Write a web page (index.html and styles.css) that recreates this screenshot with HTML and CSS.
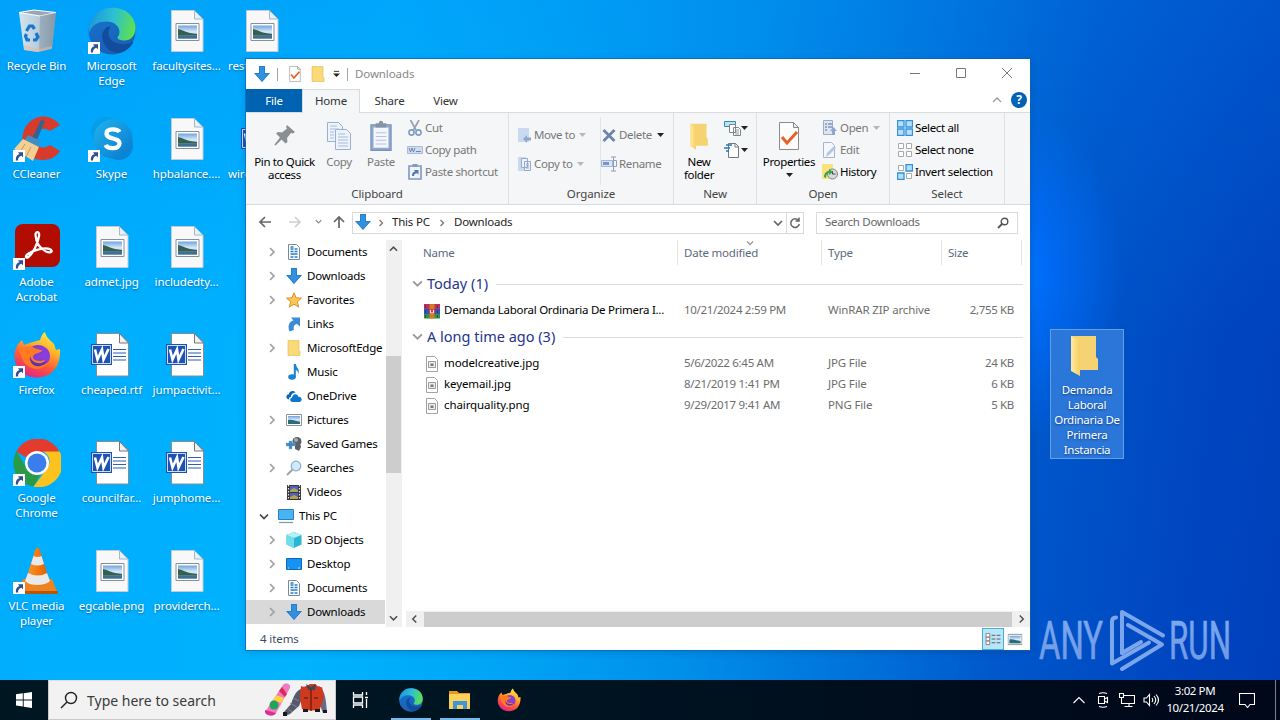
FILE: index.html
```html
<!DOCTYPE html>
<html lang="en">
<head>
<meta charset="utf-8">
<title>Downloads</title>
<link rel="stylesheet" href="styles.css">
</head>
<body>
<svg class="defs" aria-hidden="true">
  <defs>
    <linearGradient id="gSky" x1="0" y1="0" x2="0" y2="1"><stop offset="0" stop-color="#6fa3e0"/><stop offset=".5" stop-color="#dcebf7"/><stop offset="1" stop-color="#4f86b8"/></linearGradient>
    <linearGradient id="gBin" x1="0" x2="1"><stop offset="0" stop-color="#e6eaee"/><stop offset=".6" stop-color="#c3ccd4"/><stop offset="1" stop-color="#8e9aa4"/></linearGradient>
    <linearGradient id="gEdgeTop" x1="0" y1=".3" x2="1" y2=".5"><stop offset="0" stop-color="#1a96dc"/><stop offset=".5" stop-color="#2cc0d4"/><stop offset="1" stop-color="#5fe04e"/></linearGradient>
    <linearGradient id="gEdgeMid" x1="0" y1="0" x2=".4" y2="1"><stop offset="0" stop-color="#1477d4"/><stop offset="1" stop-color="#1b5fb4"/></linearGradient>
    <linearGradient id="gFox" x1=".8" y1="0" x2=".3" y2="1"><stop offset="0" stop-color="#fff04a"/><stop offset=".35" stop-color="#ffb02a"/><stop offset=".65" stop-color="#ff5a36"/><stop offset="1" stop-color="#e0208c"/></linearGradient>
    <linearGradient id="gFold" x1="0" x2="1"><stop offset="0" stop-color="#ffe9a8"/><stop offset="1" stop-color="#f8cf5e"/></linearGradient>
    <linearGradient id="gCone" x1="0" x2="1"><stop offset="0" stop-color="#ff9a2a"/><stop offset=".5" stop-color="#f47a10"/><stop offset="1" stop-color="#d85c00"/></linearGradient>
    <linearGradient id="gSkype" x1="0" y1="0" x2="1" y2="1"><stop offset="0" stop-color="#1fb4ee"/><stop offset="1" stop-color="#0a78cc"/></linearGradient>
    <linearGradient id="gMark" x1="0" y1="0" x2="0" y2="1"><stop offset="0" stop-color="#7eabf0"/><stop offset="1" stop-color="#6d97e2"/></linearGradient>
  </defs>
  <symbol id="shortcut" viewBox="0 0 12 12"><path d="M0 0h12v12H0z" fill="#fff"/><path d="M3 10.500C2.500 7 4 4.500 6.500 4.200L5 2.300h5v5L8.200 5.800C6 6.500 5 8 5 10.500z" fill="#2f4f8f"/></symbol>
  <symbol id="bin" viewBox="0 0 48 48"><path d="M6 5.500 21 3l22 2.500-4 36-14 3.500-14-2z" fill="url(#gBin)" opacity=".92"/><path d="M6 5.500 21 3l22 2.500L27 9z" fill="#9aa7b2" stroke="#fff" stroke-width="1"/><path d="M27 9 43 5.500l-4 36-13 3.500z" fill="#8797a5" opacity=".55"/><path d="m11 38 15 4 13-3-.5 3L25 45l-14-2z" fill="#e8b8a4" opacity=".55"/><g fill="none" stroke="#1677d0" stroke-width="3.200"><path d="m13.500 24 3-5h3l2 3"/><path d="m23 26 2 4-2 3h-3"/><path d="M17 33h-3l-1.500-4 1-2"/></g></symbol>
  <symbol id="edge" viewBox="0 0 48 48"><circle cx="24" cy="24" r="23.500" fill="url(#gEdgeMid)"/><path d="M1 19C4 7 13 .5 24 .5 38 .5 47.500 10 47.500 21c0 8-5 12.500-11 12.500-4 0-7-1-7-3 0-1 2-2 2-6 0-5-5-10-13-10C11 14.500 4 17 1 26z" fill="url(#gEdgeTop)"/><path d="M19 20c-4 3-6 8-4 14 2 7 9 12 16 12 6-1 11-5 14-10 .6-1-.2-1.600-1.200-1-9 5-21 1-23-6-1-4 0-7 2-9.500z" fill="#114d9c"/></symbol>
  <symbol id="imgfile" viewBox="0 0 48 48"><path d="M8.500 3.500h23L40 12v32.500H8.500z" fill="#f8f8f8" stroke="#c5cbd0"/><path d="M31.500 3.500V12H40z" fill="#dff2fd" stroke="#a9b7c0"/><path d="M13 16.500h23v17H13z" fill="#fff" stroke="#85909a"/><path d="M15 18.500h19v13H15z" fill="url(#gSky)"/><path d="M15 22c5 1 8 4 19 5v1.500H15z" fill="#33614e"/><path d="M15 28.500h19v3H15z" fill="#3f6f92"/></symbol>
  <symbol id="word" viewBox="0 0 48 48"><path d="M8.500 2.500h23L40.500 12v33H8.500z" fill="#fff" stroke="#8c8c8c"/><path d="M31.500 2.500V12h9z" fill="#f1f1f1" stroke="#777"/><path d="M25 18.500h13M25 22h13M25 25.500h13M25 29h13" stroke="#2b5fb8" stroke-width="1.200"/><path d="M3 13h21v21H3z" fill="#1c52b4"/><path d="M4.500 14.500h18v18h-18z" fill="none" stroke="#fff" stroke-width=".8"/><path d="m7 18.500 2.500 10 4.500-10 1.500 10 5-10.500" fill="none" stroke="#fff" stroke-width="2.600"/></symbol>
  <symbol id="cc" viewBox="0 0 48 48"><path d="M47 10C42 4 36 1 29 1.500 18 2.500 9 12 9.500 25S19 45 30 45c8 0 14-4 17-9l-10-6c-6 5-16 2-16-6 0-9 9-13 16-8z" fill="#d83a2c"/><path d="m28 5 4 1-8 19-5-2z" fill="#32658e"/><path d="m15 20 13 6-4 8-14-6z" fill="#3f8fc4"/><path d="m10 24 16 8-6 14L1 34z" fill="#f3cf93"/><path d="m12 29-5 8m11-5-5 10" stroke="#c99c58"/></symbol>
  <symbol id="skype" viewBox="0 0 48 48"><circle cx="18" cy="17" r="15" fill="#079ee8"/><circle cx="31" cy="31" r="14" fill="#0a86d8"/><circle cx="25" cy="24" r="19.500" fill="url(#gSkype)"/><path d="M31.500 17c-2-3.500-13-4-13 1.500 0 6.500 13 3.500 13 10 0 6-11.500 6-14 1.500" fill="none" stroke="#fff" stroke-width="4.300"/></symbol>
  <symbol id="adobe" viewBox="0 0 48 48"><rect x="2" y="1" width="45" height="43" rx="8" fill="#b20b00"/><path d="M22.500 12c0-4 4.500-4 3.500 1-1.200 8-6 17-10.500 21-3 2-4-1 0-3.500 6-4 17-6.500 22-4 3 2 0 4-4.500 2-6-3-10-9-10.500-16.500z" fill="none" stroke="#fff" stroke-width="2.300"/></symbol>
  <symbol id="firefox" viewBox="0 0 48 48"><path d="M27 9C28 5 30 2 32 1c1 5 5 8 9 12l2 6 4-1c1 16-7 28-22 28.500C11 47 1 37 1.500 24 2 17 5 12 9 9l2 5c4-2 10-3 16-5z" fill="url(#gFox)"/><circle cx="25" cy="25" r="11" fill="#7b3fd4"/><path d="M6 19c4-4 11-5 18-1l6 1c-2 3-7 3-9 5-3 3 1 6 6 6 4 0 6-3 10-3-1 7-7 11-14 11-10-1-14-9-17-19z" fill="#ff7a22"/><path d="M17 25c1 5 6 8 11 7 3-.5 5-3 8-3-3 5-9 7-13 6s-7-5-6-10z" fill="#6330b0"/><path d="M23 17c6-4 14 0 14 8 0 3-1 5-3 7-2-3-5-4-9-4-3 0-4-3-1-4 3-.5 5-1.500 6-4z" fill="#8a3ddc"/></symbol>
  <symbol id="chrome" viewBox="0 0 48 48"><path d="M3.500 12.500a24 24 0 0 1 43 .5H24A11 11 0 0 0 14 19z" fill="#e33b2e"/><path d="M3.500 12a24 24 0 0 0 17 35.500l10-17.500A11.500 11.500 0 0 1 14 30z" fill="#2a9a47"/><path d="M46.500 12.500A24 24 0 0 1 20.500 47.700L34 29.500a11 11 0 0 0-4-17z" fill="#fcc31e"/><circle cx="24" cy="24" r="12" fill="#fff"/><circle cx="24" cy="24" r="9.500" fill="#3b7ded"/></symbol>
  <symbol id="vlc" viewBox="0 0 48 48"><path d="m10 32-6 15h41l-6-15z" fill="#ee8420"/><path d="M4 44h41v3H4z" fill="#b95408"/><path d="M22.500 2q2-2 4 0l10 32q-5 5-12.500 5t-11.500-5z" fill="url(#gCone)"/><path d="m20.500 9-2.500 8q6 3 13 0L28.500 9q-4 2-8 0zM15 26l-3 8q4 4 12.500 4T37 34l-3-8q-9 5-19 0z" fill="#e9e9e9"/></symbol>
  <symbol id="bigfolder" viewBox="0 0 48 48"><path d="M9 4h25v21l2 2v11H9z" fill="#f5d272"/><path d="m9 4 9 5v35L9 39z" fill="url(#gFold)"/></symbol>
  <symbol id="down" viewBox="0 0 16 16"><path d="M5 0h6v7h5l-8 9-8-9h5z" fill="#3390dc"/><path d="M5.500.5h5v7H15L8 15.300 1 7.500h4.500z" fill="none" stroke="#1c78c8" stroke-width=".7"/></symbol>
  <symbol id="folder" viewBox="0 0 16 16"><path d="M2 .5h11v10l1 1v4H2z" fill="#f9d978" stroke="#e2b84e" stroke-width=".6"/></symbol>
  <symbol id="doc" viewBox="0 0 16 16"><path d="M2.500.5h8l3 3v12h-11z" fill="#fff" stroke="#7d8b96"/><path d="M4.500 3h3M4.500 5h3m1 0h3M4.500 7.500h3m1 0h3m-7 2.500h7m-7 3h3m1 0h3" stroke="#2680c8" stroke-width="1.400"/></symbol>
  <symbol id="star" viewBox="0 0 16 16"><path d="m8 .8 2.100 5 5.400.4-4.200 3.500 1.400 5.400L8 12.200l-4.700 2.900 1.400-5.400L.5 6.200l5.400-.4z" fill="#fcc956" stroke="#e38b28"/></symbol>
  <symbol id="links" viewBox="0 0 16 16"><path d="M3.500 15.500C1 9 4 5 7.500 4.500L5 1.500h9v9l-3-2.500C8 8.500 7 11 8 14z" fill="#3a8bd8"/></symbol>
  <symbol id="music" viewBox="0 0 16 16"><ellipse cx="6" cy="13" rx="3.800" ry="2.800" fill="#1a83d2"/><path d="M7.800 0H10c0 4 4 4.500 2.500 10C12 7 11 6.500 9.800 6v7h-2z" fill="#1a83d2"/></symbol>
  <symbol id="cloud" viewBox="0 0 16 16"><path d="M3.500 11.500c-4 0-4-5-.8-5.300C3.500 2.800 8 1.800 9.500 4.500 6 5 5 7 5 9c-2 0-2.400 1.500-1.500 2.500z" fill="#0b68b8"/><path d="M6.500 14c-3-.5-3-4-.3-4.500C6.500 5.500 11.500 5.300 12.300 8.700c4-.2 4.700 4.800.7 5.300z" fill="#0b78cc"/></symbol>
  <symbol id="pic" viewBox="0 0 16 16"><path d="M.5 2.500h15v11H.5z" fill="#fff" stroke="#8a949c"/><path d="M2 4h12v8H2z" fill="url(#gSky)"/><path d="M2 8c4-1 7 1 12 2v2H2z" fill="#2c6b78"/></symbol>
  <symbol id="games" viewBox="0 0 16 16"><circle cx="11" cy="5.500" r="4.500" fill="#59616a"/><circle cx="10" cy="4" r="2" fill="#a3acb5"/><path d="M9 8c4-1 6 0 6 3l-2 4-4-2z" fill="#59616a"/><path d="M0 7h3V5h3v2h3v3H6v3H3v-3H0z" fill="#3b86c4" stroke="#8cb4d4" stroke-width=".5"/></symbol>
  <symbol id="search" viewBox="0 0 16 16"><path d="m7 9-6 6" stroke="#9ba5ae" stroke-width="2"/><circle cx="10" cy="6" r="4.800" fill="#cfeafb" stroke="#8aaecb" stroke-width="1.200"/></symbol>
  <symbol id="video" viewBox="0 0 16 16"><path d="M1 1h14v15H1z" fill="#35353b"/><path d="M4 2h8v6H4zM4 9h8v6H4z" fill="#4e62bf"/><path d="m4 6 4-2 4 2v2H4zm0 7 4-2 4 2v2H4z" fill="#b3a350"/><path d="M2.500 1v15m11-15v15" stroke="#eee" stroke-width="1.200" stroke-dasharray="1.500 1.500"/></symbol>
  <symbol id="pc" viewBox="0 0 16 16"><path d="M.5 1.500h15v10H.5z" fill="#49b4f4" stroke="#287ebc"/><path d="M1 14.500h14" stroke="#7c98ac" stroke-width="1.200"/></symbol>
  <symbol id="cube" viewBox="0 0 16 16"><path d="m8 0 7.500 3v9.500L8 16 .5 12.500V3z" fill="#2cb5d2"/><path d="m.5 3 7.500 3v10L.5 12.500z" fill="#70ddea"/><path d="m.5 3 7.500-3 7.500 3L8 6z" fill="#b4f1f5"/></symbol>
  <symbol id="desk" viewBox="0 0 16 16"><path d="M.5 2.500h15v11H.5z" fill="#1693f0" stroke="#0d6cb8"/><path d="M2 12h1m9 0h2" stroke="#b9e2ff"/></symbol>
  <symbol id="smallimg" viewBox="0 0 16 16"><path d="M2.500.5h8l3 3v12h-11z" fill="#fff" stroke="#a2a2a2"/><path d="M4.500 5.500h7v6h-7z" fill="#eee" stroke="#999"/><path d="M6.500 7.500h3v2.500h-3z" fill="#777"/></symbol>
  <symbol id="rar" viewBox="0 0 16 16"><path d="M0 1h16v5H0z" fill="#b8305c"/><path d="M0 6h16v5H0z" fill="#2c58bd"/><path d="M0 11h16v4.500H0z" fill="#2c9446"/><path d="M5.500 1h5v14.500h-5z" fill="#d47a25"/><path d="M5 6h6v5H5z" fill="#e33d33"/><path d="M6.500 7v3h3V7" fill="none" stroke="#eee"/><path d="M1.500 2v3m0 2v3m0 2v3m12-13v3m0 2v3m0 2v3" stroke="#2a2a50" opacity=".6"/></symbol>
  <symbol id="chev" viewBox="0 0 8 10"><path d="m2 1 4 4-4 4" fill="none" stroke="currentColor" stroke-width="1.700"/></symbol>
  <symbol id="chevd" viewBox="0 0 10 8"><path d="m1 2 4 4 4-4" fill="none" stroke="currentColor" stroke-width="1.700"/></symbol>
  <symbol id="tri" viewBox="0 0 7 4"><path d="M0 0h7L3.500 4z" fill="currentColor"/></symbol>
  <symbol id="check" viewBox="0 0 24 32"><path d="M2.500 2.500h14l5 5v22h-19z" fill="#fdfdfd" stroke="#8b8b8b"/><path d="M16.500 2.500v5h5z" fill="#eee" stroke="#8b8b8b"/><path d="m5 17 5 6 10-11" fill="none" stroke="#e4622a" stroke-width="3"/></symbol>
  <symbol id="pin" viewBox="0 0 24 24"><path d="m14 1 8 7-2 1.500-2-.5-4 5 .5 4-2 1.500-4-4L3 21l-1 .5-.500-1L7 13.500 3 9.500l2-1.500 4 .5 5-4-1-1.500z" fill="#8a8f94"/></symbol>
  <symbol id="copy" viewBox="0 0 24 28"><g fill="#edf3fb" stroke="#9cb0ce"><path d="M.5.5h11l4 4v15H.5z"/><path d="M8.500 7.500h11l4 4v16h-15z"/></g><path d="M3 4h7M3 7h9M3 10h4m-4 3h4m-4 3h4m4-4h7m-7 3h10m-10 3h10m-10 3h10m-10 3h10" stroke="#a9bddc"/></symbol>
  <symbol id="paste" viewBox="0 0 22 30"><path d="M1.500 4.500h19v24h-19z" fill="#8fa9cf" stroke="#7890b5"/><path d="M4 7h14v19H4z" fill="#f3f7fc"/><path d="M6 3h3c0-3 4-3 4 0h3v4H6z" fill="#8794a8"/><path d="M6 12h10M6 15.500h10M6 19h10M6 22.500h10" stroke="#b2c4df"/></symbol>
  <symbol id="cut" viewBox="0 0 16 16"><path d="M3.500 0 9 10M12 0 6.500 10" stroke="#97a2af" stroke-width="1.700"/><circle cx="4.500" cy="12.500" r="2.600" fill="none" stroke="#7c9cc9" stroke-width="1.600"/><circle cx="11.500" cy="12.500" r="2.600" fill="none" stroke="#7c9cc9" stroke-width="1.600"/></symbol>
  <symbol id="path" viewBox="0 0 16 16"><path d="M.5 4.500h15v7H.5z" fill="#cfddf1" stroke="#a7bcdc"/><path d="m2 6 1.500 4L5 6l1.500 4L8 6m1 3.500h5" fill="none" stroke="#7186aa"/></symbol>
  <symbol id="pshort" viewBox="0 0 16 16"><path d="M2 2h12v13H2z" fill="#eef4fc" stroke="#8098c2" stroke-width="1.600"/><path d="M5.500 0h5v3h-5z" fill="#8098c2"/><path d="M5 12c0-3 1-4 3-4.500L7 6h4.500v4.500L10 9.300C8 9.500 7 10.500 7 12z" fill="#5877b2"/></symbol>
  <symbol id="moveto" viewBox="0 0 16 16"><path d="M1 1h11v14H1z" fill="#c9d9f0"/><path d="M14 10.500h-4V8l-4 4 4 4v-2.500h4z" fill="#8fa7cf"/></symbol>
  <symbol id="copyto" viewBox="0 0 16 16"><path d="M1 1h8v14H1z" fill="#c9d9f0"/><path d="M4.500 2.500h6v9h-6zM7.500 5.500h6v9h-6z" fill="#eff4fb" stroke="#93a9cd"/><path d="M9 8h3m-3 2h3m-3 2h3" stroke="#93a9cd"/></symbol>
  <symbol id="del" viewBox="0 0 16 16"><path d="m2.500 3 11 11m0-11-11 11" stroke="#6e85ab" stroke-width="2.800"/></symbol>
  <symbol id="ren" viewBox="0 0 16 16"><path d="M.5 4.500h11v6H.5z" fill="#d7e4f5" stroke="#a0b6d8"/><path d="M2 6h6v3H2z" fill="#7894c0"/><path d="M12.500 1v14M10 1h5m-5 14h5m-2-10.500h2.500v6H13" fill="none" stroke="#8e9fba"/></symbol>
  <symbol id="newitem" viewBox="0 0 18 16"><path d="M.5 1.500h11v5H.5z" fill="#bde3f3" stroke="#368ca9"/><path d="M5.500 4.500h6v8h-6zM9.500 7.500h5l2 2v6h-7z" fill="#fff" stroke="#7b858c"/><path d="M11 10h4m-4 2h4m-4 2h4" stroke="#8b979e"/></symbol>
  <symbol id="easy" viewBox="0 0 18 16"><path d="M4.500 1.500h7l3 3v11h-10z" fill="#fff" stroke="#777"/><path d="M11 1v4h4" fill="none" stroke="#777"/><path d="M2 3h6M0 6h6M2 9h3" stroke="#2678be" stroke-width="1.600"/></symbol>
  <symbol id="open" viewBox="0 0 16 16"><path d="M1.500.5h9v14h-9z" fill="#dce5f3" stroke="#9dacc4"/><path d="M3 4h2m1 0h4M3 7h2m1 0h4m-7 3h2" stroke="#8197bd" stroke-width="1.500"/><path d="m10 15 0-4-2 0 3.500-4 3.500 4h-2v4z" fill="#8fa6cd"/></symbol>
  <symbol id="edit" viewBox="0 0 16 16"><path d="M1.500.5h8l3 3v12h-11z" fill="#f4f8fd" stroke="#a8b5c9"/><path d="m4 15 1-4 7-7 2 2-7 7z" fill="#b3c7e5"/></symbol>
  <symbol id="history" viewBox="0 0 16 16"><path d="M0 0h11v15H0z" fill="#fbe27e"/><circle cx="10.500" cy="10" r="5" fill="#d8dadb" stroke="#7f8588"/><path d="M10.500 7v3h3" fill="none" stroke="#444"/><path d="M2 13c0-4 3-6 5-6V5l4 3-4 3V9c-2 0-3 2-3 5z" fill="#39a449"/></symbol>
  <symbol id="selall" viewBox="0 0 16 16"><path d="M.5.5h6.500v6.500H.5zM9 .5h6.500v6.500H9zM.5 9h6.500v6.500H.5zM9 9h6.500v6.500H9z" fill="#b7defb" stroke="#2e93dc" stroke-width="1.300"/></symbol>
  <symbol id="selnone" viewBox="0 0 16 16"><path d="M1.500 1.500h5v5h-5zM9.500 1.500h5v5h-5zM1.500 9.500h5v5h-5zM9.500 9.500h5v5h-5z" fill="#fff" stroke="#aaa"/></symbol>
  <symbol id="selinv" viewBox="0 0 16 16"><path d="M1.500 1.500h5v5h-5zM9.500 9.500h5v5h-5z" fill="#fff" stroke="#aaa"/><path d="M9 .5h6.500v6.500H9zM.5 9h6.500v6.500H.5z" fill="#b7defb" stroke="#2e93dc" stroke-width="1.300"/></symbol>
  <symbol id="arrow" viewBox="0 0 14 12"><path d="M13 6H2m5-5L2 6l5 5" fill="none" stroke="currentColor" stroke-width="1.700"/></symbol>
</svg>

<main class="desktop">
  <div class="shortcuts">
    <div class="item"><svg class="pic"><use href="#bin"/></svg><span>Recycle Bin</span></div>
    <div class="item link"><svg class="pic"><use href="#cc"/></svg><svg class="badge"><use href="#shortcut"/></svg><span>CCleaner</span></div>
    <div class="item link"><svg class="pic"><use href="#adobe"/></svg><svg class="badge"><use href="#shortcut"/></svg><span>Adobe<br>Acrobat</span></div>
    <div class="item link"><svg class="pic"><use href="#firefox"/></svg><svg class="badge"><use href="#shortcut"/></svg><span>Firefox</span></div>
    <div class="item link"><svg class="pic"><use href="#chrome"/></svg><svg class="badge"><use href="#shortcut"/></svg><span>Google<br>Chrome</span></div>
    <div class="item link"><svg class="pic"><use href="#vlc"/></svg><svg class="badge"><use href="#shortcut"/></svg><span>VLC media<br>player</span></div>
    <div class="item link"><svg class="pic"><use href="#edge"/></svg><svg class="badge"><use href="#shortcut"/></svg><span>Microsoft<br>Edge</span></div>
    <div class="item link"><svg class="pic"><use href="#skype"/></svg><svg class="badge"><use href="#shortcut"/></svg><span>Skype</span></div>
    <div class="item"><svg class="pic"><use href="#imgfile"/></svg><span>admet.jpg</span></div>
    <div class="item"><svg class="pic"><use href="#word"/></svg><span>cheaped.rtf</span></div>
    <div class="item"><svg class="pic"><use href="#word"/></svg><span>councilfar...</span></div>
    <div class="item"><svg class="pic"><use href="#imgfile"/></svg><span>egcable.png</span></div>
    <div class="item"><svg class="pic"><use href="#imgfile"/></svg><span>facultysites...</span></div>
    <div class="item"><svg class="pic"><use href="#imgfile"/></svg><span>hpbalance....</span></div>
    <div class="item"><svg class="pic"><use href="#imgfile"/></svg><span>includedty...</span></div>
    <div class="item"><svg class="pic"><use href="#word"/></svg><span>jumpactivit...</span></div>
    <div class="item"><svg class="pic"><use href="#word"/></svg><span>jumphome...</span></div>
    <div class="item"><svg class="pic"><use href="#imgfile"/></svg><span>providerch...</span></div>
    <div class="item"><svg class="pic"><use href="#imgfile"/></svg><span class="under">rest</span></div>
    <div class="item"><svg class="pic"><use href="#word"/></svg><span class="under">wire</span></div>
  </div>

  <div class="picked"><svg class="pic"><use href="#bigfolder"/></svg><span>Demanda<br>Laboral<br>Ordinaria De<br>Primera<br>Instancia</span></div>

  <svg class="watermark" viewBox="0 0 194 64">
    <g font-family="Roboto, sans-serif" font-weight="400" font-size="53" fill="url(#gMark)" stroke="url(#gMark)" stroke-width=".6">
      <text x="0" y="50" textLength="64" lengthAdjust="spacingAndGlyphs">ANY</text>
      <text x="130" y="50" textLength="62" lengthAdjust="spacingAndGlyphs">RUN</text>
    </g>
    <g fill="none" stroke="#7ba6ec" stroke-width="4" stroke-linejoin="round" stroke-linecap="round">
      <path d="M77 8.500c-3 0-4 1.500-4 4v42l37-21"/>
      <path d="M83 44V3l41 23.500"/>
      <path d="M89 16l34 19.500L83 60"/>
      <path d="M83 44l19-11"/>
    </g>
  </svg>

  <section class="window">
    <header class="titlebar">
      <svg class="i16"><use href="#down"/></svg><i class="bar"></i>
      <svg class="qa" viewBox="0 0 24 32"><use href="#check"/></svg>
      <svg class="i16 qf"><use href="#folder"/></svg>
      <svg class="qd" viewBox="0 0 8 8"><path d="M1 1h6" stroke="#222"/><path d="M0 3.500h8L4 7.500z" fill="#222"/></svg>
      <i class="bar"></i><span class="title">Downloads</span>
      <div class="caption">
        <svg viewBox="0 0 12 12"><path d="M1 5.500h10" /></svg>
        <svg viewBox="0 0 12 12"><path d="M1.500 .5h9v9h-9z"/></svg>
        <svg viewBox="0 0 12 12"><path d="m1 0 10 10m0-10L1 10"/></svg>
      </div>
    </header>
    <nav class="tabs">
      <span class="file">File</span><span class="home">Home</span><span class="share">Share</span><span class="view">View</span>
      <svg class="fold" viewBox="0 0 10 8"><path d="m1 6 4-4 4 4" fill="none" stroke="#999" stroke-width="1.300"/></svg>
      <b class="help">?</b>
    </nav>
    <div class="ribbon">
      <div class="group clip"><div class="body">
        <div class="big pinb"><svg viewBox="0 0 24 24"><use href="#pin"/></svg><span>Pin to Quick<br>access</span></div>
        <div class="big off cpy"><svg viewBox="0 0 24 28"><use href="#copy"/></svg><span>Copy</span></div>
        <div class="big off pst"><svg viewBox="0 0 22 30"><use href="#paste"/></svg><span>Paste</span></div>
        <div class="rows off"><div><svg class="i16"><use href="#cut"/></svg>Cut</div><div><svg class="i16"><use href="#path"/></svg>Copy path</div><div><svg class="i16"><use href="#pshort"/></svg>Paste shortcut</div></div>
      </div><span class="name">Clipboard</span></div>
      <div class="group org"><div class="body">
        <div class="rows two off mv"><div><svg class="i16"><use href="#moveto"/></svg>Move to<svg class="t"><use href="#tri"/></svg></div><div><svg class="i16"><use href="#copyto"/></svg>Copy to<svg class="t"><use href="#tri"/></svg></div></div>
        <div class="rows two off"><div><svg class="i16"><use href="#del"/></svg>Delete<svg class="t on"><use href="#tri"/></svg></div><div><svg class="i16"><use href="#ren"/></svg>Rename</div></div>
      </div><span class="name">Organize</span></div>
      <div class="group new"><div class="body">
        <div class="big nf"><svg viewBox="8 3 32 43"><use href="#bigfolder" width="48" height="48"/></svg><span>New<br>folder</span></div>
        <div class="rows"><div><svg class="i18"><use href="#newitem"/></svg><svg class="t on"><use href="#tri"/></svg></div><div><svg class="i18"><use href="#easy"/></svg><svg class="t on"><use href="#tri"/></svg></div></div>
      </div><span class="name">New</span></div>
      <div class="group opn"><div class="body">
        <div class="big prop"><svg viewBox="0 0 24 32"><use href="#check"/></svg><span>Properties</span><svg class="t on"><use href="#tri"/></svg></div>
        <div class="rows"><div class="off"><svg class="i16"><use href="#open"/></svg>Open<svg class="t"><use href="#tri"/></svg></div><div class="off"><svg class="i16"><use href="#edit"/></svg>Edit</div><div><svg class="i16"><use href="#history"/></svg>History</div></div>
      </div><span class="name">Open</span></div>
      <div class="group sel"><div class="body">
        <div class="rows"><div><svg class="i16"><use href="#selall"/></svg>Select all</div><div><svg class="i16"><use href="#selnone"/></svg>Select none</div><div><svg class="i16"><use href="#selinv"/></svg>Invert selection</div></div>
      </div><span class="name">Select</span></div>
    </div>
    <div class="address">
      <svg class="nav"><use href="#arrow"/></svg>
      <svg class="nav fwd"><use href="#arrow"/></svg>
      <svg class="nd"><use href="#chevd"/></svg>
      <svg class="nav up"><use href="#arrow"/></svg>
      <div class="crumbs"><svg class="i16"><use href="#down"/></svg><svg class="cv"><use href="#chev"/></svg><span class="c1">This PC</span><svg class="cv"><use href="#chev"/></svg><span class="c2">Downloads</span><svg class="cd"><use href="#chevd"/></svg></div>
      <div class="reload"><svg viewBox="0 0 12 12"><path d="M9.500 3.500A4.300 4.300 0 1 0 10.300 7M10 .5v3.500H6.500" fill="none" stroke="#666" stroke-width="1.500"/></svg></div>
      <div class="find"><span>Search Downloads</span><svg viewBox="0 0 12 12"><circle cx="7.500" cy="4.500" r="3.300" fill="none" stroke="#555" stroke-width="1.400"/><path d="m5 7-4 4" stroke="#555" stroke-width="1.800"/></svg></div>
    </div>
    <div class="content">
      <aside class="tree">
        <div><svg class="ex"><use href="#chev"/></svg><svg class="i16"><use href="#doc"/></svg>Documents</div>
        <div><svg class="ex"><use href="#chev"/></svg><svg class="i16"><use href="#down"/></svg>Downloads</div>
        <div><svg class="ex"><use href="#chev"/></svg><svg class="i16"><use href="#star"/></svg>Favorites</div>
        <div><svg class="ex"></svg><svg class="i16"><use href="#links"/></svg>Links</div>
        <div><svg class="ex"><use href="#chev"/></svg><svg class="i16"><use href="#folder"/></svg>MicrosoftEdge</div>
        <div><svg class="ex"></svg><svg class="i16"><use href="#music"/></svg>Music</div>
        <div><svg class="ex"></svg><svg class="i16"><use href="#cloud"/></svg>OneDrive</div>
        <div><svg class="ex"><use href="#chev"/></svg><svg class="i16"><use href="#pic"/></svg>Pictures</div>
        <div><svg class="ex"></svg><svg class="i16"><use href="#games"/></svg>Saved Games</div>
        <div><svg class="ex"><use href="#chev"/></svg><svg class="i16"><use href="#search"/></svg>Searches</div>
        <div><svg class="ex"></svg><svg class="i16"><use href="#video"/></svg>Videos</div>
        <div class="root"><svg class="ex open"><use href="#chevd"/></svg><svg class="i16"><use href="#pc"/></svg>This PC</div>
        <div><svg class="ex"><use href="#chev"/></svg><svg class="i16"><use href="#cube"/></svg>3D Objects</div>
        <div><svg class="ex"><use href="#chev"/></svg><svg class="i16"><use href="#desk"/></svg>Desktop</div>
        <div><svg class="ex"><use href="#chev"/></svg><svg class="i16"><use href="#doc"/></svg>Documents</div>
        <div class="current"><svg class="ex"><use href="#chev"/></svg><svg class="i16"><use href="#down"/></svg>Downloads</div>
      </aside>
      <div class="vscroll"><svg class="flip"><use href="#chevd"/></svg><i></i><svg><use href="#chevd"/></svg></div>
      <div class="files">
        <div class="cols"><span>Name</span><span>Date modified<svg class="sort"><use href="#chevd"/></svg></span><span>Type</span><span>Size</span></div>
        <div class="grp"><svg><use href="#chevd"/></svg><span class="g1">Today (1)</span><i></i></div>
        <div class="row"><span><svg class="i16"><use href="#rar"/></svg><em class="long">Demanda Laboral Ordinaria De Primera I...</em></span><span>10/21/2024 2:59 PM</span><span>WinRAR ZIP archive</span><span>2,755 KB</span></div>
        <div class="grp"><svg><use href="#chevd"/></svg><span class="g2">A long time ago (3)</span><i></i></div>
        <div class="row"><span><svg class="i16"><use href="#smallimg"/></svg><em>modelcreative.jpg</em></span><span>5/6/2022 6:45 AM</span><span>JPG File</span><span>24 KB</span></div>
        <div class="row"><span><svg class="i16"><use href="#smallimg"/></svg><em>keyemail.jpg</em></span><span>8/21/2019 1:41 PM</span><span>JPG File</span><span>6 KB</span></div>
        <div class="row"><span><svg class="i16"><use href="#smallimg"/></svg><em>chairquality.png</em></span><span>9/29/2017 9:41 AM</span><span>PNG File</span><span>5 KB</span></div>
        <div class="hscroll"><svg class="flip"><use href="#chev"/></svg><i></i><svg><use href="#chev"/></svg></div>
      </div>
    </div>
    <footer class="status"><span>4 items</span>
      <div class="mode active"><svg viewBox="0 0 16 14"><path d="M.5.500h4v4h-4zM.500 4.500h4v4h-4zM.500 8.500h4v4h-4z" fill="#fff" stroke="#8a8080"/><path d="M6.500 2.500h4m1.500 0h4M6.500 6.500h4m1.500 0h4M6.500 10.500h4m1.500 0h4" stroke="#555"/></svg></div>
      <div class="mode"><svg viewBox="0 1 16 14"><use href="#pic" width="16" height="16"/></svg></div>
    </footer>
  </section>
</main>

<footer class="taskbar">
  <div class="start"><svg viewBox="0 0 16 16"><path d="M0 2.300 6.800 1.300v6.200H0zM7.700 1.200 16 0v7.500H7.700zM0 8.400h6.800v6.200L0 13.600zM7.700 8.400H16V16l-8.300-1.200z" fill="#fff"/></svg></div>
  <div class="searchbox">
    <svg class="lens" viewBox="0 0 18 18"><circle cx="11" cy="7" r="5.500" fill="none" stroke="#222" stroke-width="1.400"/><path d="m7 11-6 6" stroke="#222" stroke-width="1.400"/></svg>
    <span>Type here to search</span>
    <svg class="art" viewBox="0 0 66 36">
      <path d="m19 3c3-3 8-1 7 3L12 31c-2 4-10 3-11-1z" fill="#f07ac0"/><path d="m18 5 5 7-2 3-6-6z" fill="#d92a5a"/><path d="m12 13 8 3-3 5-8-3z" fill="#ffd23f"/><circle cx="10" cy="23" r="4.500" fill="#20a455"/><path d="m1 28 11 3c-3 4-10 3-11-1z" fill="#d83090"/>
      <path d="M37 7c-6 2-8 10-10 15l-7 8 1 4 5-2 9-8 4-10z" fill="#575869"/><path d="m29 16 6 3m-9 2 7 4m-10 1 5 4" stroke="#82859b"/>
      <path d="M55 4c7 4 7 18 8 26l-4 1-5-13z" fill="#686a86"/><path d="M37 4q4 2 9-2h5q4 4 7 3l2 10-4 12q-7 3-18 0l-2-11z" fill="#cf3a1f"/><path d="m42 2 5 3 5-3-1 6h-7z" fill="#44475c"/><path d="M47 7v22M40 16h4m6 0h4" stroke="#742313" stroke-width="1.500"/><path d="m39 27h5v3h-5zm12 0h5v3h-5zm8 1h4v3h-4zM19 30h4v4h-4z" fill="#17191e"/>
    </svg>
  </div>
  <div class="app"><svg class="tv" viewBox="0 0 18 18"><path d="M1.500 1v3h9V1M1.500 17v-3h9v3M1.500 6h9v6h-9zM14.500 1v3m0 4v9M13 6.500h3" fill="none" stroke="#fff" stroke-width="1.300"/></svg></div>
  <div class="app run"><svg><use href="#edge"/></svg></div>
  <div class="app run"><svg viewBox="0 0 24 24"><path d="M1 3h8l2 2h11v4H1z" fill="#e59a18"/><path d="M1 6h21v15H1z" fill="#fbd15b"/><path d="M5 13h14v8h-4v-4H9v4H5z" fill="#3e97d8"/></svg></div>
  <div class="app"><svg><use href="#firefox"/></svg></div>
  <div class="tray">
    <svg viewBox="0 0 16 16"><path d="m2.500 11 5.500-5.500 5.500 5.500"/></svg>
    <svg viewBox="0 0 16 16"><path d="M3.500 4.500h6v7h-6zM9.500 7l3-1.500v5L9.500 9M4 1.500q4-1.500 8 0M4 14.500q4 1.500 8 0"/></svg>
    <svg viewBox="0 0 16 16"><path d="M4.500 3.500h11v8h-13v-4M10 11.500v3M5.500 14.500h8M.5 1.500h4v4h-4zM2.500 5.500v3"/></svg>
    <svg viewBox="0 0 16 16"><path d="M1 6h2.500l3-3.500v11l-3-3.500H1zM9 6q1.500 2 0 4M11 4q3.500 4 0 8M13 2.500q5 5.500 0 11"/></svg>
    <div class="clock">3:02 PM<br>10/21/2024</div>
    <svg class="note" viewBox="0 0 16 16"><path d="M.5 1.500h15v11H11l-2.500 3-2.500-3H.5z"/></svg>
    <i class="peek"></i>
  </div>
</footer>
</body>
</html>
```
FILE: styles.css
```css
* { box-sizing: border-box; }
body {
  margin: 0; width: 1280px; height: 720px; overflow: hidden;
  font: 11.5px/15px "Noto Sans", "Open Sans", sans-serif; color: #000;
  display: flex; flex-direction: column; letter-spacing: -.1px;
}
svg { display: block; flex: none; }
.defs { position: absolute; width: 0; height: 0; }
.i16 { width: 16px; height: 16px; }
.i18 { width: 18px; height: 16px; }

.desktop {
  position: relative; height: 680px; flex: none; overflow: hidden;
  background:
    radial-gradient(ellipse 115px 170px at 1010px 275px, #0078ff 0%, rgba(0,110,255,.75) 35%, rgba(0,90,225,0) 100%),
    linear-gradient(to bottom, rgba(0,130,240,.25), rgba(0,160,255,0) 50%),
    linear-gradient(98deg, #00acfd 0%, #00b3ff 29%, #00a6f7 42%, #0090ea 56%, #006ed8 71%, #0056ca 80%, #0046c0 92%, #003fba 100%);
}
.shortcuts { display: grid; grid-auto-flow: column; grid-template-rows: repeat(6, 108px); grid-auto-columns: 75px; width: 300px; margin-left: -1px; }
.item { position: relative; padding-top: 7px; display: flex; flex-direction: column; align-items: center; color: #fff; text-align: center; }
.pic { width: 48px; height: 48px; }
.item span { margin-top: 3px; white-space: nowrap; text-shadow: 0 1px 2px rgba(0,40,90,.5); }
.item .under { align-self: flex-start; margin-left: 4px; width: 18px; overflow: hidden; }
.badge { position: absolute; left: 14px; top: 42px; width: 12px; height: 12px; }

.picked { position: absolute; left: 1050px; top: 329px; width: 74px; height: 130px; border: 1px solid #5fa0e8; background: #2a76d9; display: flex; flex-direction: column; align-items: center; color: #fff; text-align: center; padding-top: 2px; letter-spacing: -.3px; text-shadow: 0 1px 2px rgba(0,30,80,.6); }
.picked span { margin-top: 2px; white-space: nowrap; }
.picked .pic { margin-right: 2px; }
.watermark { position: absolute; left: 1039px; top: 609px; width: 194px; height: 64px; overflow: visible; letter-spacing: 0; }

.window { position: absolute; left: 246px; top: 59px; width: 784px; height: 591px; background: #fff; display: flex; flex-direction: column; box-shadow: 0 0 0 1px rgba(10,100,175,.65), 0 2px 8px rgba(0,30,80,.2); }
.titlebar { height: 30px; flex: none; display: flex; align-items: center; padding-left: 8px; color: #888; }
.bar { width: 1px; height: 13px; background: #a5a5a5; }
.titlebar > .bar { margin-left: 7px; }
.qa { width: 14px; height: 18px; margin-left: 10px; }
.qf { margin-left: 8px; }
.qd { width: 7px; height: 8px; margin-left: 7px; }
.title { margin-left: 7px; padding-bottom: 2px; }
.caption { margin-left: auto; display: flex; gap: 34px; padding-right: 17px; }
.caption svg { width: 12px; height: 12px; fill: none; stroke: #777; stroke-width: 1; }

.tabs { height: 23px; flex: none; display: flex; line-height: 24px; text-align: center; color: #333; letter-spacing: -.2px; }
.file { width: 56px; background: #0063b1; color: #fff; }
.home { width: 58px; height: 24px; background: #f5f6f7; border: 1px solid #dadbdc; border-bottom: 0; line-height: 22px; position: relative; z-index: 1; }
.share { width: 59px; }
.view { width: 53px; }
.fold { width: 10px; height: 8px; margin: 7px 9px 0 auto; }
.help { width: 16px; height: 16px; margin: 3px 3px 0 0; border-radius: 50%; background: #0062b4; color: #fff; line-height: 16px; font-size: 12px; }

.ribbon { height: 93px; flex: none; background: #f5f6f7; border-top: 1px solid #dadbdc; border-bottom: 1px solid #dadbdc; display: flex; letter-spacing: -.35px; }
.group { display: flex; flex-direction: column; border-right: 1px solid #dfe0e1; height: 91px; }
.body { height: 72px; flex: none; display: flex; padding-top: 4px; }
.name { text-align: center; line-height: 18px; color: #444; letter-spacing: -.1px; }
.clip { width: 263px; } .org { width: 165px; } .new { width: 83px; } .opn { width: 133px; } .sel { width: 115px; }
.big { display: flex; flex-direction: column; align-items: center; text-align: center; line-height: 13px; white-space: nowrap; }
.big > svg:first-child { width: 24px; height: 32px; margin-top: 3px; }
.big span { margin-top: 3px; }
.pinb { width: 77px; } .cpy { width: 32px; } .pst { width: 52px; }
.nf { width: 50px; } .nf > svg:first-child { height: 28px; margin: 6px 0 1px 2px; }
.prop { width: 64px; } .prop .t { margin: 5px 0 0; }
.off { color: #777; }
.rows > div { height: 22px; display: flex; align-items: center; gap: 2px; white-space: nowrap; padding-bottom: 2px; }
.rows > div > svg { margin-top: 1px; }
.two { padding-top: 4px; }
.two > div { height: 29px; }
.two .i16 + .t { margin-left: 3px; }
.mv { width: 84px; margin-left: 8px; border-right: 1px solid #e2e3e4; }
.mv > div { gap: 1px; }
.t { width: 7px; height: 4px; color: #b5b8bc; }
.rows .t { margin-left: 3px; }
.t.on { color: #222; }
.opn .rows { margin-left: 1px; } .sel .rows { margin-left: 7px; }
.new .rows .t { margin-left: -3px; }

.address { height: 35px; flex: none; display: flex; align-items: center; padding-left: 12px; color: #333; letter-spacing: -.2px; }
.address span { padding-bottom: 2px; }
.nav { width: 14px; height: 12px; color: #666; margin-bottom: 2px; }
.fwd { transform: scaleX(-1); color: #d0d0d0; margin-left: 16px; }
.nd { width: 7px; height: 7px; margin-left: 13px; margin-bottom: 2px; color: #888; }
.up { transform: rotate(90deg); margin-left: 10px; }
.crumbs { margin-left: 6px; width: 435px; height: 22px; border: 1px solid #d9d9d9; display: flex; align-items: center; padding-left: 2px; color: #222; }
.crumbs .i16 { margin-bottom: 2px; }
.cv { width: 6px; height: 8px; color: #777; margin-left: 7px; }
.c1 { margin-left: 8px; width: 40px; white-space: nowrap; } .c2 { margin-left: 9px; }
.cd { width: 10px; height: 8px; color: #666; margin: 0 3px 0 auto; }
.reload { width: 17px; height: 22px; border: solid #d9d9d9; border-width: 1px 1px 1px 0; display: grid; place-items: center; }
.reload svg { width: 12px; height: 12px; }
.find { margin-left: 12px; width: 202px; height: 22px; border: 1px solid #d9d9d9; display: flex; align-items: center; justify-content: space-between; padding: 0 8px; color: #666; letter-spacing: -.3px; }
.find svg { width: 12px; height: 12px; }

.content { height: 388px; flex: none; display: flex; }
.tree { width: 139px; letter-spacing: -.2px; }
.tree > div { height: 24px; display: flex; align-items: center; padding: 0 0 2px 22px; white-space: nowrap; overflow: hidden; }
.tree .i16 { margin: 2px 5px 0 10px; }
.tree .root { padding-left: 13px; }
.tree .root .i16 { margin-left: 9px; }
.ex { width: 8px; height: 10px; color: #a0a0a0; margin-top: 2px; }
.ex.open { width: 10px; height: 9px; color: #444; }
.tree .current { background: #d9d9d9; }
.vscroll { width: 16px; height: 387px; margin-left: 1px; background: #f0f0f0; display: flex; flex-direction: column; align-items: center; padding: 5px 1px 5px 0; color: #505050; }
.vscroll svg { width: 9px; height: 8px; }
.flip { transform: rotate(180deg); }
.vscroll i { width: 15px; height: 117px; background: #cdcdcd; margin: 103px 0 auto; }
.files { width: 628px; display: flex; flex-direction: column; }
.cols { height: 28px; display: grid; grid-template-columns: 276px 144px 120px 80px 8px; color: #5b6a80; letter-spacing: -.2px; }
.cols span { position: relative; height: 25px; line-height: 26px; padding-left: 6px; border-right: 1px solid #e5e5e5; }
.cols span:first-child { padding-left: 21px; }
.sort { position: absolute; left: 68px; top: 0; width: 8px; height: 6px; color: #999; }
.grp { height: 32px; display: flex; align-items: center; font: 14.5px/20px "Noto Sans", "Open Sans", sans-serif; color: #26348b; padding: 0 7px 0 10px; letter-spacing: 0; }
.grp span { padding-bottom: 2px; }
.grp svg { width: 11px; height: 9px; color: #9a9a9a; margin-right: 4px; margin-bottom: 1px; }
.grp i { height: 1px; flex: 1; background: #dcdcdc; margin-left: 8px; }
.row { height: 21px; display: grid; grid-template-columns: 276px 144px 120px 72px; align-items: center; color: #6d6d6d; white-space: nowrap; }
.row > span { padding: 0 0 2px 6px; }
.row > span:nth-child(2) { letter-spacing: -.3px; }
.row > span:nth-child(3) { letter-spacing: -.15px; }
.row > span:first-child { padding: 0 0 0 22px; display: flex; align-items: center; gap: 4px; color: #000; }
.row > span:last-child { text-align: right; padding-left: 0; letter-spacing: -.35px; }
.row em { font-style: normal; padding-bottom: 2px; }
.row .long { letter-spacing: -.25px; }
.hscroll { margin: auto 0 1px 4px; height: 16px; background: #f0f0f0; display: flex; align-items: center; padding: 0 5px; color: #505050; justify-content: space-between; }
.hscroll svg { width: 7px; height: 10px; }
.hscroll i { height: 15px; width: 588px; background: #cdcdcd; margin-left: -1px; }
.status { height: 22px; flex: 1; display: flex; align-items: center; padding: 0 4px 0 14px; color: #3b4a63; }
.status span { margin-right: auto; padding-bottom: 2px; }
.mode { width: 22px; height: 22px; display: grid; place-items: center; }
.mode.active { background: #b8e6f8; border: 1px solid #4badd0; }
.mode svg { width: 16px; height: 13px; }

.taskbar { height: 40px; flex: none; display: flex; background: linear-gradient(90deg, #001722, #001422 45%, #000b1b 80%, #000819); color: #fff; }
.start { width: 48px; display: grid; place-items: center; }
.start svg { width: 16px; height: 16px; }
.searchbox { width: 288px; background: #f2f2f2; border: 1px solid #c9c9c9; border-top-color: #e0e0e0; display: flex; align-items: center; padding-left: 11px; font-size: 14px; letter-spacing: 0; color: #3a3a3a; }
.lens { width: 18px; height: 18px; margin-right: 9px; }
.art { width: 66px; height: 36px; margin-left: auto; margin-right: 5px; }
.app { width: 49px; display: grid; place-items: center; }
.app svg { width: 24px; height: 24px; }
.app .tv { width: 18px; height: 18px; }
.run { background: linear-gradient(#76b9ed, #76b9ed) center bottom / 40px 2px no-repeat; }
.app + .run { margin-left: 1px; } .run + .run { margin-left: 0; }
.tray { margin-left: auto; display: flex; align-items: center; gap: 8px; }
.tray svg { width: 16px; height: 16px; fill: none; stroke: #fff; stroke-width: 1.1; }
.clock { text-align: center; line-height: 17px; width: 60px; margin-left: -2px; white-space: nowrap; letter-spacing: -.4px; padding-bottom: 2px; }
.tray .note { margin-left: 6px; }
.peek { width: 1px; height: 40px; background: #7a8290; margin: 0 4px 0 12px; }
```
